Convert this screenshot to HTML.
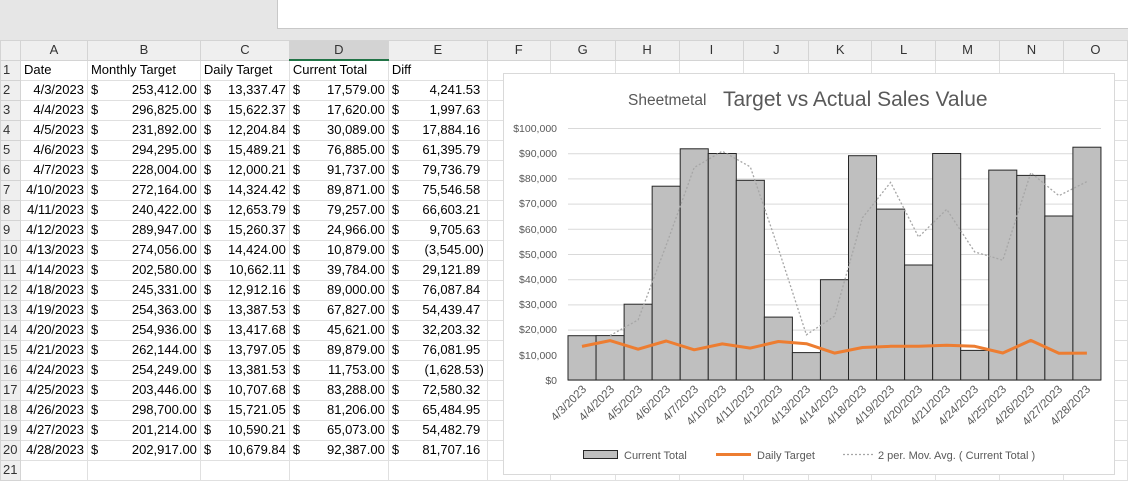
<!DOCTYPE html>
<html><head><meta charset="utf-8"><style>
*{margin:0;padding:0;box-sizing:border-box}
body{width:1128px;height:482px;overflow:hidden;background:#fff;position:relative;font-family:"Liberation Sans",Arial,sans-serif;font-size:13px;color:#000}
.top{position:absolute;left:0;top:0;width:1128px;height:40px;background:#e6e6e6}
.top .box{position:absolute;left:277px;top:0;right:0;height:29px;background:#fff;border-left:1px solid #c8c8c8;border-bottom:1px solid #c8c8c8}
table{position:absolute;left:0;top:40px;border-collapse:collapse;table-layout:fixed}
td{height:20px;border:1px solid #e0e0e0;padding:0 3px;white-space:nowrap;overflow:hidden;line-height:18px}
tr.h td{height:19px;background:#efefef;text-align:center;color:#333;border-color:#d4d4d4}
td.rn{background:#efefef;color:#333;padding:0 2px;border-color:#d4d4d4}
td.sel{background:#d3d3d3!important;border-bottom:2px solid #217346!important}
.r{text-align:right}
.m{display:flex;justify-content:space-between}
</style></head><body>
<div class="top"><div class="box"></div></div>
<table>
<colgroup><col style="width:20px"><col style="width:67px"><col style="width:113px"><col style="width:89px"><col style="width:99px"><col style="width:99px"><col style="width:63px"><col style="width:65px"><col style="width:64px"><col style="width:65px"><col style="width:65px"><col style="width:63px"><col style="width:64px"><col style="width:64px"><col style="width:64px"><col style="width:64px"></colgroup>
<tr class="h"><td></td><td>A</td><td>B</td><td>C</td><td class="sel">D</td><td>E</td><td>F</td><td>G</td><td>H</td><td>I</td><td>J</td><td>K</td><td>L</td><td>M</td><td>N</td><td>O</td></tr>
<tr><td class="rn">1</td><td>Date</td><td>Monthly Target</td><td>Daily Target</td><td>Current Total</td><td>Diff</td><td></td><td></td><td></td><td></td><td></td><td></td><td></td><td></td><td></td><td></td></tr>
<tr><td class="rn">2</td><td class="r">4/3/2023</td><td><div class="m"><span>$</span><span>253,412.00</span></div></td><td><div class="m"><span>$</span><span>13,337.47</span></div></td><td><div class="m"><span>$</span><span>17,579.00</span></div></td><td><div class="m"><span>$</span><span>4,241.53&nbsp;</span></div></td><td></td><td></td><td></td><td></td><td></td><td></td><td></td><td></td><td></td><td></td></tr>
<tr><td class="rn">3</td><td class="r">4/4/2023</td><td><div class="m"><span>$</span><span>296,825.00</span></div></td><td><div class="m"><span>$</span><span>15,622.37</span></div></td><td><div class="m"><span>$</span><span>17,620.00</span></div></td><td><div class="m"><span>$</span><span>1,997.63&nbsp;</span></div></td><td></td><td></td><td></td><td></td><td></td><td></td><td></td><td></td><td></td><td></td></tr>
<tr><td class="rn">4</td><td class="r">4/5/2023</td><td><div class="m"><span>$</span><span>231,892.00</span></div></td><td><div class="m"><span>$</span><span>12,204.84</span></div></td><td><div class="m"><span>$</span><span>30,089.00</span></div></td><td><div class="m"><span>$</span><span>17,884.16&nbsp;</span></div></td><td></td><td></td><td></td><td></td><td></td><td></td><td></td><td></td><td></td><td></td></tr>
<tr><td class="rn">5</td><td class="r">4/6/2023</td><td><div class="m"><span>$</span><span>294,295.00</span></div></td><td><div class="m"><span>$</span><span>15,489.21</span></div></td><td><div class="m"><span>$</span><span>76,885.00</span></div></td><td><div class="m"><span>$</span><span>61,395.79&nbsp;</span></div></td><td></td><td></td><td></td><td></td><td></td><td></td><td></td><td></td><td></td><td></td></tr>
<tr><td class="rn">6</td><td class="r">4/7/2023</td><td><div class="m"><span>$</span><span>228,004.00</span></div></td><td><div class="m"><span>$</span><span>12,000.21</span></div></td><td><div class="m"><span>$</span><span>91,737.00</span></div></td><td><div class="m"><span>$</span><span>79,736.79&nbsp;</span></div></td><td></td><td></td><td></td><td></td><td></td><td></td><td></td><td></td><td></td><td></td></tr>
<tr><td class="rn">7</td><td class="r">4/10/2023</td><td><div class="m"><span>$</span><span>272,164.00</span></div></td><td><div class="m"><span>$</span><span>14,324.42</span></div></td><td><div class="m"><span>$</span><span>89,871.00</span></div></td><td><div class="m"><span>$</span><span>75,546.58&nbsp;</span></div></td><td></td><td></td><td></td><td></td><td></td><td></td><td></td><td></td><td></td><td></td></tr>
<tr><td class="rn">8</td><td class="r">4/11/2023</td><td><div class="m"><span>$</span><span>240,422.00</span></div></td><td><div class="m"><span>$</span><span>12,653.79</span></div></td><td><div class="m"><span>$</span><span>79,257.00</span></div></td><td><div class="m"><span>$</span><span>66,603.21&nbsp;</span></div></td><td></td><td></td><td></td><td></td><td></td><td></td><td></td><td></td><td></td><td></td></tr>
<tr><td class="rn">9</td><td class="r">4/12/2023</td><td><div class="m"><span>$</span><span>289,947.00</span></div></td><td><div class="m"><span>$</span><span>15,260.37</span></div></td><td><div class="m"><span>$</span><span>24,966.00</span></div></td><td><div class="m"><span>$</span><span>9,705.63&nbsp;</span></div></td><td></td><td></td><td></td><td></td><td></td><td></td><td></td><td></td><td></td><td></td></tr>
<tr><td class="rn">10</td><td class="r">4/13/2023</td><td><div class="m"><span>$</span><span>274,056.00</span></div></td><td><div class="m"><span>$</span><span>14,424.00</span></div></td><td><div class="m"><span>$</span><span>10,879.00</span></div></td><td><div class="m"><span>$</span><span>(3,545.00)</span></div></td><td></td><td></td><td></td><td></td><td></td><td></td><td></td><td></td><td></td><td></td></tr>
<tr><td class="rn">11</td><td class="r">4/14/2023</td><td><div class="m"><span>$</span><span>202,580.00</span></div></td><td><div class="m"><span>$</span><span>10,662.11</span></div></td><td><div class="m"><span>$</span><span>39,784.00</span></div></td><td><div class="m"><span>$</span><span>29,121.89&nbsp;</span></div></td><td></td><td></td><td></td><td></td><td></td><td></td><td></td><td></td><td></td><td></td></tr>
<tr><td class="rn">12</td><td class="r">4/18/2023</td><td><div class="m"><span>$</span><span>245,331.00</span></div></td><td><div class="m"><span>$</span><span>12,912.16</span></div></td><td><div class="m"><span>$</span><span>89,000.00</span></div></td><td><div class="m"><span>$</span><span>76,087.84&nbsp;</span></div></td><td></td><td></td><td></td><td></td><td></td><td></td><td></td><td></td><td></td><td></td></tr>
<tr><td class="rn">13</td><td class="r">4/19/2023</td><td><div class="m"><span>$</span><span>254,363.00</span></div></td><td><div class="m"><span>$</span><span>13,387.53</span></div></td><td><div class="m"><span>$</span><span>67,827.00</span></div></td><td><div class="m"><span>$</span><span>54,439.47&nbsp;</span></div></td><td></td><td></td><td></td><td></td><td></td><td></td><td></td><td></td><td></td><td></td></tr>
<tr><td class="rn">14</td><td class="r">4/20/2023</td><td><div class="m"><span>$</span><span>254,936.00</span></div></td><td><div class="m"><span>$</span><span>13,417.68</span></div></td><td><div class="m"><span>$</span><span>45,621.00</span></div></td><td><div class="m"><span>$</span><span>32,203.32&nbsp;</span></div></td><td></td><td></td><td></td><td></td><td></td><td></td><td></td><td></td><td></td><td></td></tr>
<tr><td class="rn">15</td><td class="r">4/21/2023</td><td><div class="m"><span>$</span><span>262,144.00</span></div></td><td><div class="m"><span>$</span><span>13,797.05</span></div></td><td><div class="m"><span>$</span><span>89,879.00</span></div></td><td><div class="m"><span>$</span><span>76,081.95&nbsp;</span></div></td><td></td><td></td><td></td><td></td><td></td><td></td><td></td><td></td><td></td><td></td></tr>
<tr><td class="rn">16</td><td class="r">4/24/2023</td><td><div class="m"><span>$</span><span>254,249.00</span></div></td><td><div class="m"><span>$</span><span>13,381.53</span></div></td><td><div class="m"><span>$</span><span>11,753.00</span></div></td><td><div class="m"><span>$</span><span>(1,628.53)</span></div></td><td></td><td></td><td></td><td></td><td></td><td></td><td></td><td></td><td></td><td></td></tr>
<tr><td class="rn">17</td><td class="r">4/25/2023</td><td><div class="m"><span>$</span><span>203,446.00</span></div></td><td><div class="m"><span>$</span><span>10,707.68</span></div></td><td><div class="m"><span>$</span><span>83,288.00</span></div></td><td><div class="m"><span>$</span><span>72,580.32&nbsp;</span></div></td><td></td><td></td><td></td><td></td><td></td><td></td><td></td><td></td><td></td><td></td></tr>
<tr><td class="rn">18</td><td class="r">4/26/2023</td><td><div class="m"><span>$</span><span>298,700.00</span></div></td><td><div class="m"><span>$</span><span>15,721.05</span></div></td><td><div class="m"><span>$</span><span>81,206.00</span></div></td><td><div class="m"><span>$</span><span>65,484.95&nbsp;</span></div></td><td></td><td></td><td></td><td></td><td></td><td></td><td></td><td></td><td></td><td></td></tr>
<tr><td class="rn">19</td><td class="r">4/27/2023</td><td><div class="m"><span>$</span><span>201,214.00</span></div></td><td><div class="m"><span>$</span><span>10,590.21</span></div></td><td><div class="m"><span>$</span><span>65,073.00</span></div></td><td><div class="m"><span>$</span><span>54,482.79&nbsp;</span></div></td><td></td><td></td><td></td><td></td><td></td><td></td><td></td><td></td><td></td><td></td></tr>
<tr><td class="rn">20</td><td class="r">4/28/2023</td><td><div class="m"><span>$</span><span>202,917.00</span></div></td><td><div class="m"><span>$</span><span>10,679.84</span></div></td><td><div class="m"><span>$</span><span>92,387.00</span></div></td><td><div class="m"><span>$</span><span>81,707.16&nbsp;</span></div></td><td></td><td></td><td></td><td></td><td></td><td></td><td></td><td></td><td></td><td></td></tr>
<tr><td class="rn">21</td><td></td><td></td><td></td><td></td><td></td><td></td><td></td><td></td><td></td><td></td><td></td><td></td><td></td><td></td><td></td></tr>
</table>
<svg style="position:absolute;left:0;top:0" width="1128" height="482" font-family="Liberation Sans, Arial, sans-serif">
<rect x="503.5" y="73.5" width="611" height="401" fill="#fff" stroke="#d9d9d9"/>
<text x="628" y="105" font-size="15.5" fill="#595959">Sheetmetal</text>
<text x="723" y="106" font-size="21" fill="#595959">Target vs Actual Sales Value</text>
<g stroke="#d9d9d9" stroke-width="1">
<line x1="568" y1="128.5" x2="1101" y2="128.5"/><line x1="568" y1="153.7" x2="1101" y2="153.7"/><line x1="568" y1="178.9" x2="1101" y2="178.9"/><line x1="568" y1="204.1" x2="1101" y2="204.1"/><line x1="568" y1="229.3" x2="1101" y2="229.3"/><line x1="568" y1="254.5" x2="1101" y2="254.5"/><line x1="568" y1="279.7" x2="1101" y2="279.7"/><line x1="568" y1="304.9" x2="1101" y2="304.9"/><line x1="568" y1="330.1" x2="1101" y2="330.1"/><line x1="568" y1="355.3" x2="1101" y2="355.3"/><line x1="568" y1="380.5" x2="1101" y2="380.5"/>
</g>
<g font-size="10.5" fill="#595959" text-anchor="end">
<text x="557" y="132">$100,000</text><text x="557" y="157">$90,000</text><text x="557" y="182">$80,000</text><text x="557" y="207">$70,000</text><text x="557" y="233">$60,000</text><text x="557" y="258">$50,000</text><text x="557" y="283">$40,000</text><text x="557" y="308">$30,000</text><text x="557" y="333">$20,000</text><text x="557" y="359">$10,000</text><text x="557" y="384">$0</text>
</g>
<g fill="#bfbfbf" stroke="#262626" stroke-width="1">
<rect x="568" y="335.7" width="28.05" height="44.3"/><rect x="596.05" y="335.6" width="28.05" height="44.4"/><rect x="624.1" y="304.2" width="28.05" height="75.8"/><rect x="652.15" y="186.2" width="28.05" height="193.8"/><rect x="680.2" y="148.8" width="28.05" height="231.2"/><rect x="708.25" y="153.5" width="28.05" height="226.5"/><rect x="736.3" y="180.3" width="28.05" height="199.7"/><rect x="764.35" y="317.1" width="28.05" height="62.9"/><rect x="792.4" y="352.6" width="28.05" height="27.4"/><rect x="820.45" y="279.7" width="28.05" height="100.3"/><rect x="848.5" y="155.7" width="28.05" height="224.3"/><rect x="876.55" y="209.1" width="28.05" height="170.9"/><rect x="904.6" y="265" width="28.05" height="115"/><rect x="932.65" y="153.5" width="28.05" height="226.5"/><rect x="960.7" y="350.4" width="28.05" height="29.6"/><rect x="988.75" y="170.1" width="28.05" height="209.9"/><rect x="1016.8" y="175.4" width="28.05" height="204.6"/><rect x="1044.85" y="216" width="28.05" height="164"/><rect x="1072.9" y="147.2" width="28.05" height="232.8"/>
</g>
<polyline fill="none" stroke="#a6a6a6" stroke-width="1.3" stroke-dasharray="2,2" points="610,335.6 638.1,319.9 666.2,245.2 694.2,167.5 722.3,151.2 750.3,166.9 778.4,248.7 806.4,334.8 834.5,316.2 862.5,217.7 890.6,182.4 918.6,237.1 946.7,209.3 974.7,251.9 1002.8,260.2 1030.8,172.7 1058.9,195.7 1086.9,181.6"/>
<polyline fill="none" stroke="#ed7d31" stroke-width="3" stroke-linejoin="round" points="582,346.4 610,340.6 638.1,349.2 666.2,341 694.2,349.8 722.3,343.9 750.3,348.1 778.4,341.5 806.4,343.7 834.5,353.1 862.5,347.5 890.6,346.3 918.6,346.2 946.7,345.2 974.7,346.3 1002.8,353 1030.8,340.4 1058.9,353.3 1086.9,353.1"/>
<g font-size="11.5" fill="#595959" text-anchor="end">
<text transform="translate(587,390) rotate(-45)">4/3/2023</text><text transform="translate(615,390) rotate(-45)">4/4/2023</text><text transform="translate(643,390) rotate(-45)">4/5/2023</text><text transform="translate(671,390) rotate(-45)">4/6/2023</text><text transform="translate(699,390) rotate(-45)">4/7/2023</text><text transform="translate(727,390) rotate(-45)">4/10/2023</text><text transform="translate(755,390) rotate(-45)">4/11/2023</text><text transform="translate(783,390) rotate(-45)">4/12/2023</text><text transform="translate(811,390) rotate(-45)">4/13/2023</text><text transform="translate(839,390) rotate(-45)">4/14/2023</text><text transform="translate(867,390) rotate(-45)">4/18/2023</text><text transform="translate(895,390) rotate(-45)">4/19/2023</text><text transform="translate(923,390) rotate(-45)">4/20/2023</text><text transform="translate(951,390) rotate(-45)">4/21/2023</text><text transform="translate(979,390) rotate(-45)">4/24/2023</text><text transform="translate(1007,390) rotate(-45)">4/25/2023</text><text transform="translate(1035,390) rotate(-45)">4/26/2023</text><text transform="translate(1063,390) rotate(-45)">4/27/2023</text><text transform="translate(1091,390) rotate(-45)">4/28/2023</text>
</g>
<rect x="583.5" y="450.5" width="34" height="8" fill="#bfbfbf" stroke="#262626"/>
<text x="624" y="459" font-size="11" fill="#595959">Current Total</text>
<line x1="716" y1="454.5" x2="751" y2="454.5" stroke="#ed7d31" stroke-width="3"/>
<text x="757" y="459" font-size="11" fill="#595959">Daily Target</text>
<line x1="843" y1="454.5" x2="874" y2="454.5" stroke="#a6a6a6" stroke-width="1.3" stroke-dasharray="2,2"/>
<text x="878" y="459" font-size="11" fill="#595959">2 per. Mov. Avg. ( Current Total )</text>
</svg>
</body></html>
